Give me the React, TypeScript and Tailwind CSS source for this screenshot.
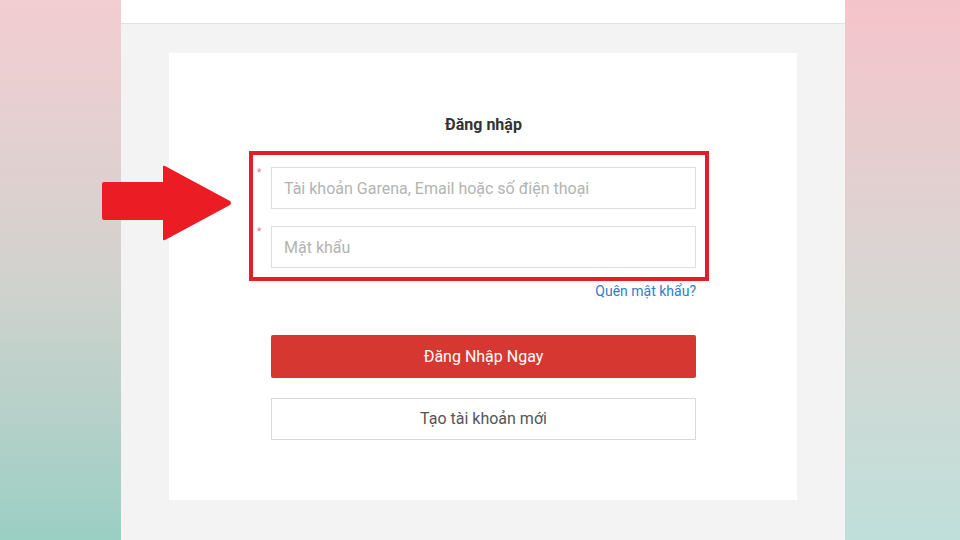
import React from 'react';

const Field: React.FC<{ placeholder: string }> = ({ placeholder }) => (
  <div className="relative">
    <span className="absolute left-[-14px] top-[1px] text-[10px] leading-none text-[#e07b86]">*</span>
    <input
      className="w-full h-[42px] border border-[#dedede] bg-white px-[12px] text-[16px] text-[#333] placeholder:text-[#b3b3b3] outline-none"
      placeholder={placeholder}
      readOnly
    />
  </div>
);

export default function App() {
  return (
    <div className="relative flex w-[960px] h-[540px] overflow-hidden font-['Roboto',sans-serif]">
      <div className="w-[121px] h-full bg-gradient-to-b from-[#f3cdd2] via-[#d3d2ce] to-[#9acfc4]" />

      <div className="flex-1 flex flex-col bg-[#f3f3f3]">
        <div className="h-[24px] bg-white border-b border-[#e2e2e2]" />
        <div className="px-[48px] pt-[29px] flex-1">
          <div className="relative bg-white h-[447px] pt-[62px] pl-[102px] pr-[101px]">
            <h1 className="text-center text-[16px] font-bold text-[#333] leading-[20px]">Đăng nhập</h1>

            <div className="mt-[32px] flex flex-col gap-[17px]">
              <Field placeholder="Tài khoản Garena, Email hoặc số điện thoại" />
              <Field placeholder="Mật khẩu" />
            </div>

            <div className="mt-[14px] flex justify-end">
              <a className="text-[14px] leading-[18px] text-[#2e7dcc]">Quên mật khẩu?</a>
            </div>

            <button className="mt-[35px] w-full h-[43px] bg-[#d63731] rounded-[2px] text-white text-[16px]">
              Đăng Nhập Ngay
            </button>
            <button className="mt-[20px] w-full h-[42px] bg-white border border-[#d9d9d9] text-[#555] text-[16px]">
              Tạo tài khoản mới
            </button>

            <div className="absolute left-[80px] top-[98px] w-[460px] h-[130px] border-[4px] border-[#e21f26]" />
          </div>
        </div>
      </div>

      <div className="w-[115px] h-full bg-gradient-to-b from-[#f5c4cb] via-[#d9d5d2] to-[#bfdfda]" />

      <svg className="absolute left-[102px] top-[165px]" width="130" height="76" viewBox="0 0 130 76">
        <path
          d="M2 17 H61 V2 Q61 0 63 1 L128 36 Q130 38 128 40 L63 75 Q61 76 61 74 V55 H2 Q0 55 0 53 V19 Q0 17 2 17 Z"
          fill="#ec1c24"
        />
      </svg>
    </div>
  );
}
